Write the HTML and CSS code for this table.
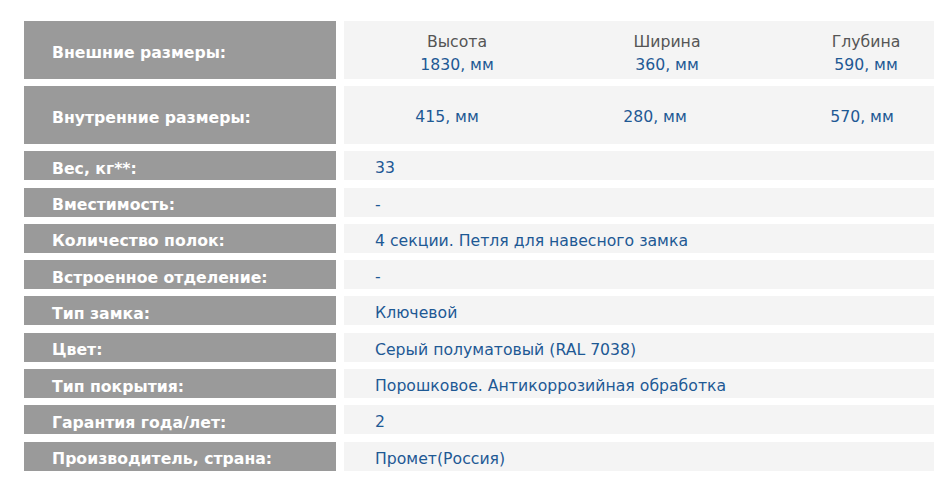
FILE: index.html
```html
<!DOCTYPE html>
<html lang="ru">
<head>
<meta charset="utf-8">
<link rel="stylesheet" href="styles.css">
</head>
<body>
<div class="specs">
  <div class="row tall">
    <div class="label">Внешние размеры:</div>
    <div class="value dims dims-head">
      <div class="dim"><span class="dim-name">Высота</span><span class="dim-val">1830, мм</span></div>
      <div class="dim"><span class="dim-name">Ширина</span><span class="dim-val">360, мм</span></div>
      <div class="dim"><span class="dim-name">Глубина</span><span class="dim-val">590, мм</span></div>
    </div>
  </div>
  <div class="row tall">
    <div class="label">Внутренние размеры:</div>
    <div class="value dims dims-vals">
      <div class="dim"><span class="dim-val">415, мм</span></div>
      <div class="dim"><span class="dim-val">280, мм</span></div>
      <div class="dim"><span class="dim-val">570, мм</span></div>
    </div>
  </div>
  <div class="row"><div class="label">Вес, кг**:</div><div class="value">33</div></div>
  <div class="row"><div class="label">Вместимость:</div><div class="value">-</div></div>
  <div class="row"><div class="label">Количество полок:</div><div class="value">4 секции. Петля для навесного замка</div></div>
  <div class="row"><div class="label">Встроенное отделение:</div><div class="value">-</div></div>
  <div class="row"><div class="label">Тип замка:</div><div class="value">Ключевой</div></div>
  <div class="row"><div class="label">Цвет:</div><div class="value">Серый полуматовый (RAL 7038)</div></div>
  <div class="row"><div class="label">Тип покрытия:</div><div class="value">Порошковое. Антикоррозийная обработка</div></div>
  <div class="row"><div class="label">Гарантия года/лет:</div><div class="value">2</div></div>
  <div class="row"><div class="label">Производитель, страна:</div><div class="value">Промет(Россия)</div></div>
</div>
</body>
</html>
```
FILE: styles.css
```css
html, body {
  margin: 0;
  padding: 0;
  background: #ffffff;
}
body {
  font-family: "DejaVu Sans", Verdana, sans-serif;
  width: 934px;
  height: 500px;
  overflow: hidden;
}
.specs {
  display: flex;
  flex-direction: column;
  gap: 7.3px;
  padding: 20.7px 0 0 24px;
}
.row {
  display: flex;
  gap: 8px;
  height: 29px;
}
.row.tall {
  height: 58px;
}
.label {
  width: 312px;
  flex: none;
  background: #9a9a9a;
  color: #ffffff;
  font-weight: bold;
  font-size: 15.7px;
  display: flex;
  align-items: center;
  padding: 5px 0 0 28px;
  box-sizing: border-box;
}
.value {
  flex: 1;
  background: #f4f4f4;
  color: #1e5994;
  font-size: 15.7px;
  display: flex;
  align-items: center;
  padding: 4px 0 0 31px;
  box-sizing: border-box;
}
.dims {
  display: grid;
  align-items: center;
}
.dims-head {
  grid-template-columns: 164px 256px 142px;
  padding-top: 6px;
}
.dims-vals {
  grid-template-columns: 144px 272px 142px;
}
.dim {
  display: flex;
  flex-direction: column;
  align-items: center;
  line-height: 23px;
}
.dim-name {
  color: #555555;
}
.dim-val {
  color: #1e5994;
}
```
